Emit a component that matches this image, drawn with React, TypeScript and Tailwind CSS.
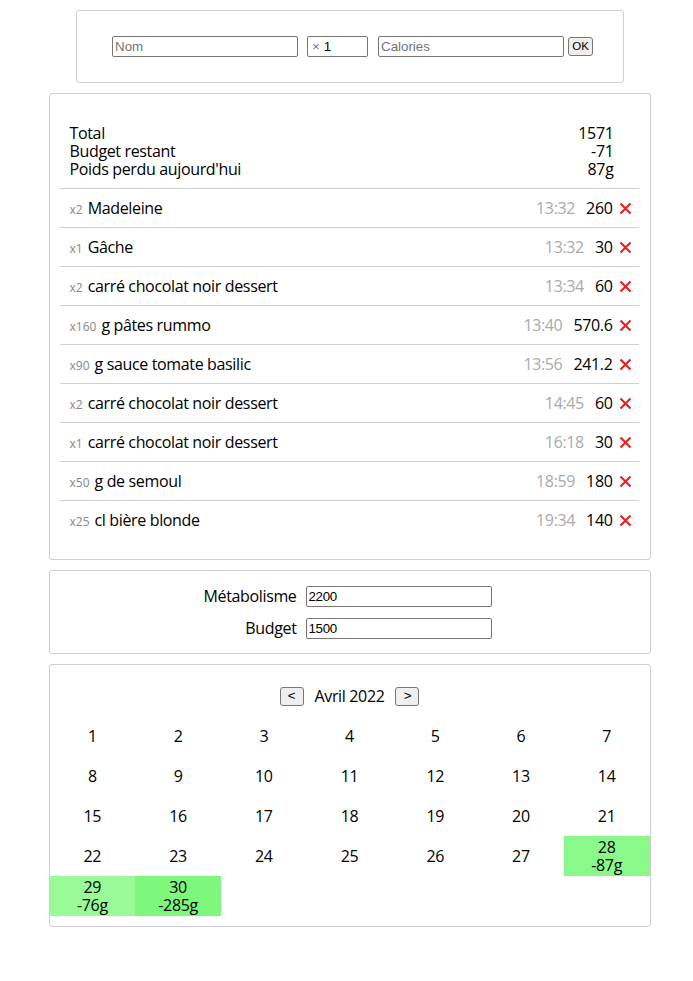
import React from 'react';

// Journal de calories : saisie, liste du jour, réglages et calendrier

type Entry = { qty: string; name: string; time: string; cal: string };

const entries: Entry[] = [
  { qty: 'x2', name: 'Madeleine', time: '13:32', cal: '260' },
  { qty: 'x1', name: 'Gâche', time: '13:32', cal: '30' },
  { qty: 'x2', name: 'carré chocolat noir dessert', time: '13:34', cal: '60' },
  { qty: 'x160', name: 'g pâtes rummo', time: '13:40', cal: '570.6' },
  { qty: 'x90', name: 'g sauce tomate basilic', time: '13:56', cal: '241.2' },
  { qty: 'x2', name: 'carré chocolat noir dessert', time: '14:45', cal: '60' },
  { qty: 'x1', name: 'carré chocolat noir dessert', time: '16:18', cal: '30' },
  { qty: 'x50', name: 'g de semoul', time: '18:59', cal: '180' },
  { qty: 'x25', name: 'cl bière blonde', time: '19:34', cal: '140' },
];

// jours avec un poids perdu, et leur couleur de fond
const lost: Record<number, { text: string; bg: string }> = {
  28: { text: '-87g', bg: 'bg-[#89f989]' },
  29: { text: '-76g', bg: 'bg-[#98fb98]' },
  30: { text: '-285g', bg: 'bg-[#7df87d]' },
};

const inputCls =
  "h-[21px] border border-[#767676] rounded-[2px] px-[2px] font-['Liberation_Sans',sans-serif] text-[13.33px] text-black placeholder:text-[#757575] outline-none";

const buttonCls =
  "h-[19px] border border-[#767676] rounded-[3px] bg-[#efefef] px-0 font-['Liberation_Sans',sans-serif] leading-none text-black";

const Cross: React.FC = () => (
  <svg width="13" height="13" viewBox="0 0 13 13" className="ml-[6px] shrink-0" aria-hidden="true">
    <path d="M1.5 1.5L11.5 11.5M11.5 1.5L1.5 11.5" stroke="#e22424" strokeWidth="2.2" strokeLinecap="butt" />
  </svg>
);

export default function App() {
  const days = Array.from({ length: 30 }, (_, i) => i + 1);

  return (
    <div className="min-h-[981px] bg-white pl-[6px] pt-[10px] font-['Open_Sans',sans-serif] text-[16px] tracking-[-0.35px] text-black">
      <div className="flex flex-col items-center gap-[10px]">
        {/* Saisie */}
        <div className="flex h-[73px] w-[548px] items-center justify-center rounded-[3px] border border-[#cfcfcf]">
          <div className="ml-[6px] flex items-center tracking-normal">
            <input className={`${inputCls} w-[186px]`} placeholder="Nom" />
            <div className="ml-[9px] flex h-[21px] w-[61px] items-center rounded-[2px] border border-[#767676] px-[4px] font-['Liberation_Sans',sans-serif] text-[13.33px]">
              <span className="text-[#757575]">×</span>
              <span className="ml-[4px] text-black">1</span>
            </div>
            <input className={`${inputCls} ml-[10px] w-[186px]`} placeholder="Calories" />
            <button className={`${buttonCls} ml-[4px] w-[25px] text-[11.5px]`}>OK</button>
          </div>
        </div>

        {/* Journée */}
        <div className="w-[602px] rounded-[3px] border border-[#cfcfcf] pb-[20px] pl-[10px] pr-[11px] pt-[30px]">
          <div className="flex justify-between pb-[10px] pl-[10px] pr-[25px] leading-[18px]">
            <div>
              <div>Total</div>
              <div>Budget restant</div>
              <div>Poids perdu aujourd'hui</div>
            </div>
            <div className="text-right">
              <div>1571</div>
              <div>-71</div>
              <div>87g</div>
            </div>
          </div>
          {entries.map((e, i) => (
            <div key={i} className="flex h-[39px] items-center border-t border-[#d0d0d0] pl-[10px] pr-[7px]">
              <div className="flex flex-1 items-baseline">
                <span className="text-[12px] tracking-normal text-[#888]">{e.qty}</span>
                <span className="ml-[5px]">{e.name}</span>
              </div>
              <span className="text-[#aaa]">{e.time}</span>
              <span className="ml-[11px]">{e.cal}</span>
              <Cross />
            </div>
          ))}
        </div>

        {/* Réglages */}
        <div className="flex w-[602px] justify-center rounded-[3px] border border-[#cfcfcf] pb-[14px] pt-[15px]">
          <div className="mr-[4px] grid grid-cols-[auto_auto] items-center gap-x-[9px] gap-y-[11px] leading-[21px]">
            <span className="text-right">Métabolisme</span>
            <input className={`${inputCls} w-[186px]`} defaultValue="2200" />
            <span className="text-right">Budget</span>
            <input className={`${inputCls} w-[186px]`} defaultValue="1500" />
          </div>
        </div>

        {/* Calendrier */}
        <div className="w-[602px] rounded-[3px] border border-[#cfcfcf] pb-[10px] pt-[21px]">
          <div className="flex h-[20px] items-center justify-center">
            <button className={`${buttonCls} w-[24px] text-[13.33px]`}>&lt;</button>
            <span className="mx-[11px]">Avril 2022</span>
            <button className={`${buttonCls} w-[24px] text-[13.33px]`}>&gt;</button>
          </div>
          <div className="mt-[10px] grid grid-cols-7">
            {days.map((d) => {
              const l = lost[d];
              return (
                <div
                  key={d}
                  className={`flex h-[40px] flex-col items-center justify-center leading-[18px] ${l ? l.bg : ''}`}
                >
                  <span>{d}</span>
                  {l && <span>{l.text}</span>}
                </div>
              );
            })}
          </div>
        </div>
      </div>
    </div>
  );
}
